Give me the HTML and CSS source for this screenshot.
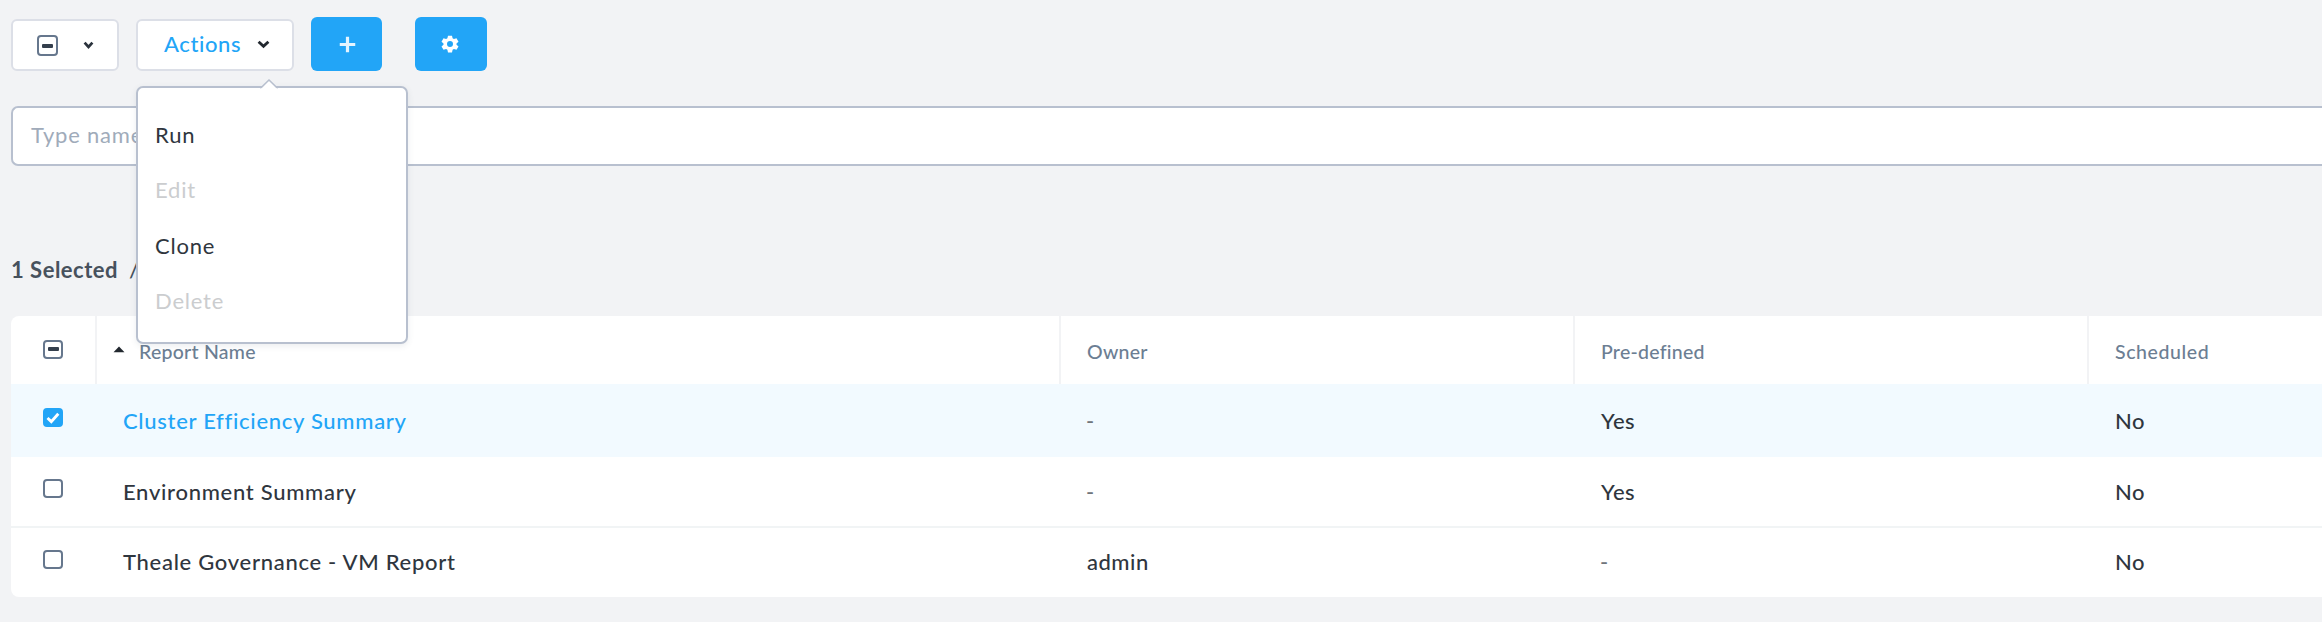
FILE: index.html
```html
<!DOCTYPE html>
<html lang="en">
<head>
<meta charset="utf-8">
<title>Reports</title>
<link rel="stylesheet" href="styles.css">
</head>
<body>
<div class="page">
  <div class="toolbar">
    <button class="btn btn-select" aria-label="Select">
      <span class="box box-lg"><span class="dash"></span></span>
      <svg class="chev" width="11" height="9" viewBox="0 0 11 9"><path d="M1.6 1.6 5.5 6 9.4 1.6" fill="none" stroke="#2b333d" stroke-width="2.7"/></svg>
    </button>
    <div class="actions">
      <button class="btn btn-actions"><span class="label">Actions</span>
        <svg class="chev" width="13" height="9" viewBox="0 0 13 9"><path d="M1.6 1.7 6.5 6.2 11.4 1.7" fill="none" stroke="#22282f" stroke-width="2.9"/></svg>
      </button>
      <div class="menu">
        <svg class="tip" width="18" height="10" viewBox="0 0 18 10"><path d="M0 10V8.500H1.500L9 1 16.500 8.500H18V10Z" fill="#fff"/><path d="M0 8.900 1.500 8.400 9 1 16.500 8.400 18 8.900" fill="none" stroke="#b8c0cf" stroke-width="1.500"/></svg>
        <div class="item">Run</div>
        <div class="item off">Edit</div>
        <div class="item">Clone</div>
        <div class="item off">Delete</div>
      </div>
    </div>
    <button class="btn-blue btn-add" aria-label="Add">
      <svg width="17" height="17" viewBox="0 0 18 18"><path d="M9 .8V17.200M.8 9H17.200" stroke="#e4f4ff" stroke-width="3.400"/></svg>
    </button>
    <button class="btn-blue btn-gear" aria-label="Settings">
      <svg width="18" height="18" viewBox="0 0 18 18"><path fill="#fff" fill-rule="evenodd" d="M7 .7h4l.6 2.600 1.300.8 2.600-.8 2 3.400-2 1.700v1.300l2 1.700-2 3.400-2.600-.8-1.300.8-.6 2.600H7l-.6-2.600-1.300-.8-2.600.8-2-3.400 2-1.700V8.400L.5 6.700l2-3.400 2.600.8 1.300-.8ZM9 6a3 3 0 1 0 0 6 3 3 0 0 0 0-6Z"/></svg>
    </button>
  </div>

  <div class="search">Type name</div>

  <div class="status"><span class="count">1 Selected</span><span class="slash">/</span></div>

  <div class="table">
    <div class="row head">
      <div class="cell check"><span class="box"><span class="dash"></span></span></div>
      <div class="cell name"><svg width="12" height="7" viewBox="0 0 12 7"><path d="M.5 6.200 6 .5 11.500 6.200Z" fill="#22282f"/></svg><span>Report Name</span></div>
      <div class="cell">Owner</div>
      <div class="cell">Pre-defined</div>
      <div class="cell wide">Scheduled</div>
    </div>
    <div class="row selected">
      <div class="cell check"><span class="box checked"><svg width="14" height="12" viewBox="0 0 14 12"><path d="M1.500 6 5.300 9.600 12.300 1.800" fill="none" stroke="#fff" stroke-width="2.900"/></svg></span></div>
      <div class="cell title">Cluster Efficiency Summary</div>
      <div class="cell dim">-</div>
      <div class="cell">Yes</div>
      <div class="cell">No</div>
    </div>
    <div class="row">
      <div class="cell check"><span class="box"></span></div>
      <div class="cell title">Environment Summary</div>
      <div class="cell dim">-</div>
      <div class="cell">Yes</div>
      <div class="cell">No</div>
    </div>
    <div class="row last">
      <div class="cell check"><span class="box"></span></div>
      <div class="cell title">Theale Governance - VM Report</div>
      <div class="cell">admin</div>
      <div class="cell dim">-</div>
      <div class="cell">No</div>
    </div>
  </div>
</div>
</body>
</html>
```
FILE: styles.css
```css
* { box-sizing: border-box; }
body {
  margin: 0;
  height: 622px;
  overflow: hidden;
  background: #f2f3f5;
  font: 500 22px/28px Lato, "Open Sans", sans-serif;
  color: #2f363e;
  letter-spacing: 0.5px;
}
.page { padding: 17px 0 0 11px; }
button { font: inherit; letter-spacing: inherit; margin: 0; padding: 0; cursor: pointer; }

.toolbar { display: flex; align-items: flex-start; height: 54px; }
.btn {
  display: flex;
  align-items: center;
  height: 52px;
  margin-top: 2px;
  border: 2px solid #dcdfe7;
  border-radius: 6px;
  background: #fff;
}
.btn-select { width: 108px; padding-left: 24px; gap: 25px; }
.actions { position: relative; margin-left: 17px; }
.btn-actions { width: 158px; padding: 0 0 2px 26px; gap: 14px; color: #22a5f7; }
.btn-actions .label { width: 79px; text-align: left; white-space: nowrap; letter-spacing: .6px; }
.btn-blue {
  display: flex;
  align-items: center;
  justify-content: center;
  width: 71px;
  height: 54px;
  margin-left: 17px;
  border: 0;
  border-radius: 6px;
  background: #22a5f7;
}
.btn-add { padding-left: 2px; }
.btn-gear { width: 72px; margin-left: 33px; padding-right: 2px; }

.menu {
  position: absolute;
  z-index: 2;
  left: 0;
  top: 69px;
  width: 272px;
  height: 258px;
  padding: 19px 17px 0;
  border: 2px solid #b8c0cf;
  border-radius: 7px;
  background: #fff;
  box-shadow: 0 2px 6px rgba(60, 75, 100, .1);
  font-weight: 400;
  letter-spacing: .8px;
}
.tip { position: absolute; left: 122px; top: -9px; }
.item { height: 55.33px; line-height: 55.33px; }
.item.off { color: #cbcdcf; }

.search {
  height: 60px;
  margin-top: 35px;
  padding-left: 18px;
  border: 2px solid #b8c0cf;
  border-right: 0;
  border-radius: 7px 0 0 7px;
  background: #fff;
  color: #a0abba;
  font-weight: 400;
  letter-spacing: .8px;
  line-height: 54px;
}
.status {
  display: flex;
  height: 28px;
  margin-top: 90px;
  line-height: 28px;
  font-weight: 700;
  color: #47515d;
}
.count { width: 118px; }
.slash { font-weight: 500; }

.table {
  margin-top: 32px;
  border-radius: 8px 0 0 8px;
  background: #fff;
  overflow: hidden;
}
.row {
  display: grid;
  grid-template-columns: 84px 964px 514px 514px 1fr;
  height: 70.5px;
  border-bottom: 2px solid #f1f4f5;
}
.cell { display: flex; align-items: center; padding: 2px 0 0 28px; white-space: nowrap; }
.title { letter-spacing: .71px; }
.dim { color: #6f757b; padding-left: 27px; }
.check { padding: 0 0 5px 32px; }
.head { height: 67.5px; border: 0; font-size: 19.5px; letter-spacing: .25px; color: #6c7e93; }
.head .cell { padding: 5px 0 0 26px; border-left: 2px solid #f2f3f5; }
.head .wide { letter-spacing: .6px; }
.head .check { padding: 0 0 1px 32px; border-left: 0; }
.head .name { padding-left: 16px; gap: 14px; }
.head .name svg { margin-bottom: 6px; }
.row.selected { height: 73.5px; border-bottom: 0; background: #f2faff; }
.row.selected .title { color: #22a5f7; }
.row.last { height: 69.5px; border-bottom: 0; }
.row.last .cell { padding-top: 0; }

.box {
  display: flex;
  align-items: center;
  justify-content: center;
  flex: none;
  width: 20px;
  height: 19px;
  border: 2px solid #66778d;
  border-radius: 4px;
  background: #fff;
}
.box-lg { width: 21px; height: 21px; margin-top: 1px; }
.dash { width: 11px; height: 4px; border-radius: 1px; background: #343f4d; }
.checked { background: #22a5f7; border-color: #22a5f7; }
.checked svg { flex: none; }
```
